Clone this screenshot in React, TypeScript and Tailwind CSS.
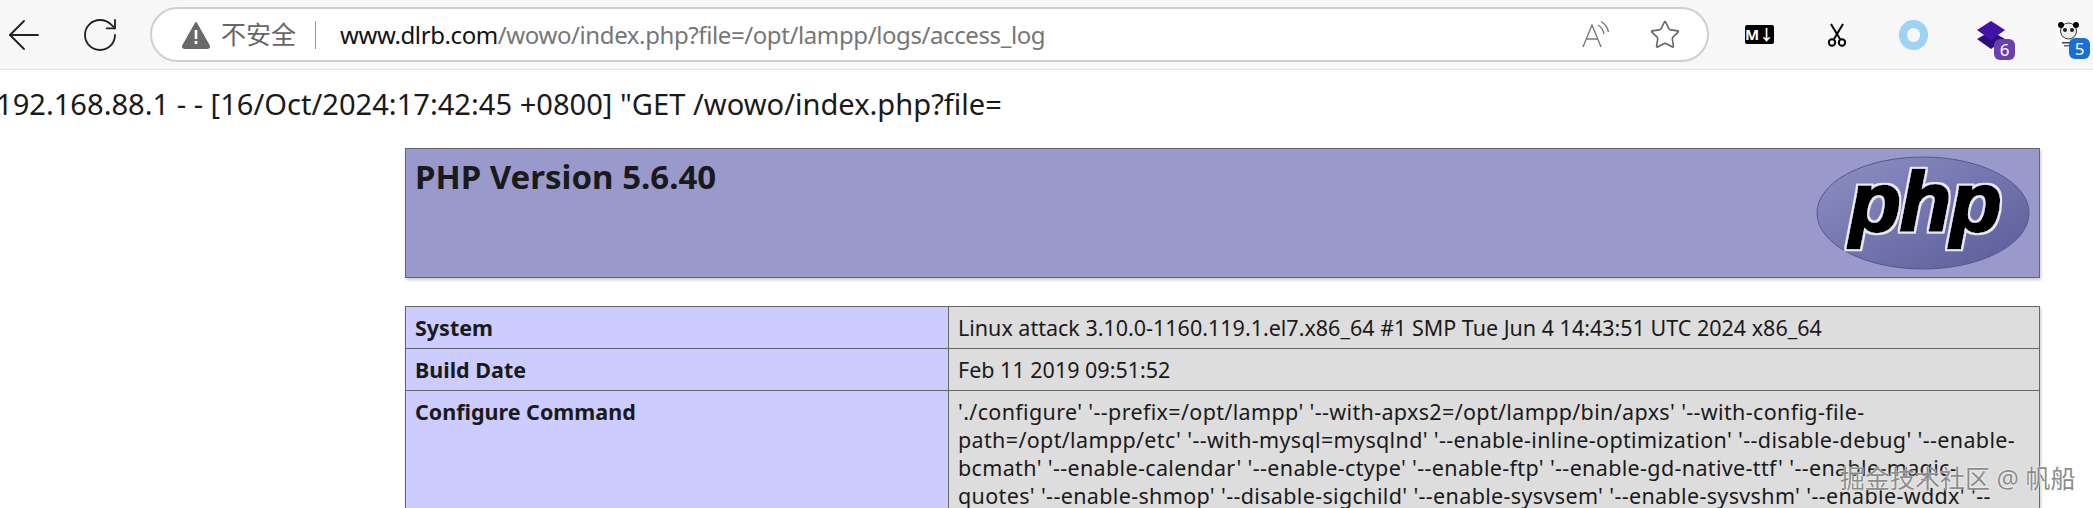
import React from "react";
import { ArrowLeft, RotateCw, Star } from "lucide-react";

const font = "font-['Noto_Sans','Noto_Sans_CJK_SC',sans-serif]";

function PhpLogo() {
  return (
    <svg viewBox="0 0 216 116" className="w-[216px] h-[116px] block">
      <defs>
        <linearGradient id="ov" x1="0" y1="0" x2="1" y2="1">
          <stop offset="0" stopColor="#8e90c4" />
          <stop offset="0.5" stopColor="#7375ae" />
          <stop offset="1" stopColor="#5a5c98" />
        </linearGradient>
        <filter id="halo" x="-10%" y="-10%" width="120%" height="120%">
          <feMorphology in="SourceAlpha" operator="dilate" radius="1.6" result="d" />
          <feFlood floodColor="#e8e8f4" />
          <feComposite in2="d" operator="in" result="w" />
          <feMerge>
            <feMergeNode in="w" />
            <feMergeNode in="SourceGraphic" />
          </feMerge>
        </filter>
      </defs>
      <ellipse cx="108" cy="58" rx="106" ry="56" fill="url(#ov)" stroke="#54568f" strokeWidth="1" />
      <text x="110" y="76" textAnchor="middle" fontFamily="'Liberation Sans',sans-serif" fontWeight="700" fontStyle="italic" fontSize="84" letterSpacing="-1" fill="#000" stroke="#000" strokeWidth="2.500" filter="url(#halo)">php</text>
    </svg>
  );
}

function Badge({ n, color }: { n: string; color: string }) {
  return (
    <span className={`absolute right-[-10px] bottom-[-11px] w-[21px] h-[21px] rounded-[6px] text-white text-[17px] leading-[21px] text-center ${color}`}>{n}</span>
  );
}

export default function App() {
  return (
    <div className={`relative h-[508px] overflow-hidden bg-white text-[#1a1a1a] ${font}`}>
      <div className="h-[70px] bg-[#f7f7f7] border-b border-[#e3e3e3] flex items-center">
        <ArrowLeft className="w-[48px] h-[48px] text-[#222]" strokeWidth={0.95} />
        <RotateCw className="w-[40px] h-[40px] ml-[32px] text-[#222]" strokeWidth={1.1} />
        <div className="ml-[30px] w-[1559px] h-[55px] rounded-full bg-white border-2 border-[#cfcfcf] flex items-center pl-[29px] pr-[26px]">
          <svg viewBox="0 0 30 28" className="w-[30px] h-[28px] shrink-0">
            <path d="M15 2 L28 25 Q28.500 27 26 27 L4 27 Q1.500 27 2 25 Z" fill="#6a6a6a" stroke="#6a6a6a" strokeWidth="2" strokeLinejoin="round" />
            <rect x="13.700" y="9" width="2.600" height="9" fill="#fff" />
            <rect x="13.700" y="20" width="2.600" height="3" fill="#fff" />
          </svg>
          <span className="ml-[10px] text-[25px] text-[#666] leading-none">不安全</span>
          <span className="ml-[19px] w-px h-[28px] bg-[#999]" />
          <span className="ml-[24px] text-[24px] tracking-[-0.4px] leading-none whitespace-nowrap text-[#111]">
            www.dlrb.com<span className="text-[#767676]">/wowo/index.php?file=/opt/lampp/logs/access_log</span>
          </span>
          <span className="ml-auto relative w-[30px] h-[30px] text-[#777]">
            <svg viewBox="0 0 30 30" className="w-[30px] h-[30px]" fill="none" stroke="currentColor" strokeWidth="1.400">
              <path d="M2 27 L11 5 L20 27 M5.500 19 H16.500" />
              <path d="M17 5 Q22 8 23 14 M20 1.500 Q26 5 27.500 12" />
            </svg>
          </span>
          <Star className="ml-[38px] w-[32px] h-[32px] text-[#666]" strokeWidth={1.2} />
        </div>
        <div className="ml-[36px] w-[29px] h-[19px] bg-black rounded-[2px] flex items-center justify-center">
          <span className="text-white text-[15px] font-bold leading-none">M↓</span>
        </div>
        <svg viewBox="0 0 20 24" className="ml-[53px] w-[20px] h-[24px]" fill="none" stroke="#000" strokeWidth="2">
          <path d="M4 1 L13 16 M16 1 L7 16" />
          <circle cx="5" cy="19.500" r="3.200" />
          <circle cx="15" cy="19.500" r="3.200" />
        </svg>
        <span className="ml-[52px] w-[29px] h-[30px] rounded-full border-[8px] border-[#9fd3f3]" />
        <span className="relative ml-[49px] w-[28px] h-[28px]">
          <svg viewBox="0 0 28 28" className="w-[28px] h-[28px]">
            <path d="M14 10 L28 18 L14 28 L0 18 Z" fill="#2d0f7a" />
            <path d="M14 0 L28 9 L14 19 L0 9 Z" fill="#4512a8" />
          </svg>
          <Badge n="6" color="bg-[#6a3fb0]" />
        </span>
        <span className="relative ml-[52px] w-[23px] h-[26px] bg-white">
          <svg viewBox="0 0 23 26" className="w-[23px] h-[26px]">
            <circle cx="11.500" cy="9" r="8" fill="#eee" stroke="#333" />
            <circle cx="4" cy="3" r="3" fill="#000" />
            <circle cx="19" cy="3" r="3" fill="#000" />
            <circle cx="8" cy="8" r="2" fill="#222" />
            <circle cx="15" cy="8" r="2" fill="#222" />
            <rect x="5" y="20" width="13" height="1.500" fill="#444" />
            <rect x="7" y="23" width="9" height="1.500" fill="#666" />
          </svg>
          <Badge n="5" color="bg-[#1a6fd6]" />
        </span>
      </div>

      <p className="text-[29.1px] leading-[34px] mt-[17px] -ml-[4px] whitespace-nowrap">192.168.88.1 - - [16/Oct/2024:17:42:45 +0800] "GET /wowo/index.php?file=</p>

      <div className="ml-[405px] w-[1635px]">
        <div className="mt-[27px] h-[130px] bg-[#9999cc] border border-[#666] shadow-[1px_2px_3px_#ccc] flex items-start justify-between">
          <h1 className="text-[33px] font-bold leading-[44px] ml-[9px] mt-[6px] text-[#1a1a1a]">PHP Version 5.6.40</h1>
          <div className="mt-[6px] mr-[8px]"><PhpLogo /></div>
        </div>
        <table className="mt-[28px] w-full border-collapse text-[21.5px] leading-[28px] shadow-[1px_2px_3px_#ccc]">
          <tbody>
            <tr>
              <td className="w-[543px] border border-[#666] bg-[#ccccff] font-bold pl-[9px] pr-[9px] pt-[7px] pb-[6px] align-top">System</td>
              <td className="border border-[#666] bg-[#dddddd] pl-[9px] pr-[9px] pt-[7px] pb-[6px] align-top">Linux attack 3.10.0-1160.119.1.el7.x86_64 #1 SMP Tue Jun 4 14:43:51 UTC 2024 x86_64</td>
            </tr>
            <tr>
              <td className="border border-[#666] bg-[#ccccff] font-bold pl-[9px] pr-[9px] pt-[7px] pb-[6px] align-top">Build Date</td>
              <td className="border border-[#666] bg-[#dddddd] pl-[9px] pr-[9px] pt-[7px] pb-[6px] align-top">Feb 11 2019 09:51:52</td>
            </tr>
            <tr>
              <td className="border border-[#666] bg-[#ccccff] font-bold pl-[9px] pr-[9px] pt-[7px] pb-[6px] align-top">Configure Command</td>
              <td className="border border-[#666] bg-[#dddddd] pl-[9px] pr-[22px] pt-[7px] pb-[6px] align-top tracking-[0.35px]">'./configure' '--prefix=/opt/lampp' '--with-apxs2=/opt/lampp/bin/apxs' '--with-config-file-path=/opt/lampp/etc' '--with-mysql=mysqlnd' '--enable-inline-optimization' '--disable-debug' '--enable-bcmath' '--enable-calendar' '--enable-ctype' '--enable-ftp' '--enable-gd-native-ttf' '--enable-magic-quotes' '--enable-shmop' '--disable-sigchild' '--enable-sysvsem' '--enable-sysvshm' '--enable-wddx' '--enable-zip' '--with-gd' '--with-zlib' '--with-curl'</td>
            </tr>
          </tbody>
        </table>
      </div>

      <span className="absolute left-[1840px] top-[466px] text-[25px] leading-none whitespace-nowrap text-[#8c8c8c] [text-shadow:0_0_2px_#fff,0_0_1px_#fff]">掘金技术社区 @ 帆船</span>
    </div>
  );
}
